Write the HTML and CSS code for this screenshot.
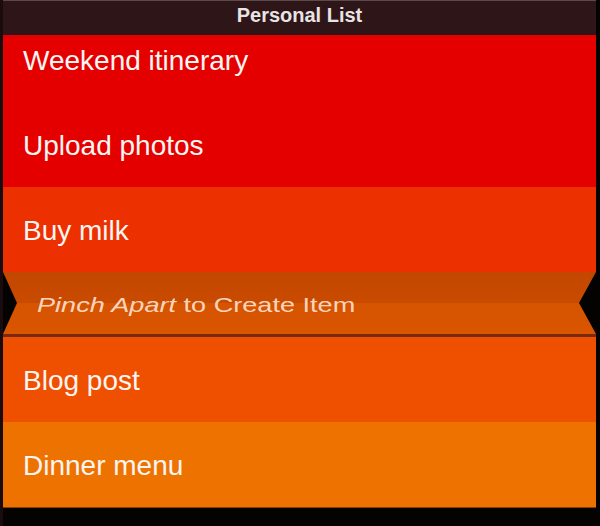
FILE: index.html
```html
<!DOCTYPE html>
<html>
<head>
<meta charset="utf-8">
<title>Personal List</title>
<link rel="stylesheet" href="styles.css">
</head>
<body>
<div class="app">
  <header class="bar"><h1 class="title">Personal List</h1></header>
  <ul class="list">
    <li class="item tone-1 first">Weekend itinerary</li>
    <li class="item tone-1">Upload photos</li>
    <li class="item tone-2">Buy milk</li>
    <li class="pinch"><span class="pinch-text"><em class="slant">Pinch Apart</em> to Create Item</span></li>
    <li class="item tone-3">Blog post</li>
    <li class="item tone-4 last">Dinner menu</li>
  </ul>
</div>
</body>
</html>
```
FILE: styles.css
```css
html, body {
  margin: 0;
  padding: 0;
  background: #070303;
}

.app {
  width: 600px;
  height: 526px;
  box-sizing: border-box;
  padding: 0 4px 0 3px;
  display: flex;
  flex-direction: column;
  background: linear-gradient(to right, #1a0c0c 0, #1a0c0c 3px, #050202 3px);
}

.bar {
  height: 35px;
  flex-shrink: 0;
  box-sizing: border-box;
  border-top: 1px solid #5a4a4a;
  background: #2e1517;
  display: flex;
  align-items: center;
  justify-content: center;
}

.title {
  margin: 0;
  padding-bottom: 6px;
  font: bold 20px/1 "Liberation Sans", Arial, sans-serif;
  color: #e8e4e4;
}

.list {
  margin: 0;
  padding: 0;
  list-style: none;
  overflow: hidden;
  height: 473px;
  flex-shrink: 0;
}

.item {
  height: 85px;
  box-sizing: border-box;
  display: flex;
  align-items: center;
  padding: 3px 0 0 20px;
  font: 28px/1 "Liberation Sans", Arial, sans-serif;
  color: #fbf5f3;
}

.first {
  margin-top: -18px;
}

.last {
  height: 86px;
  border-bottom: 1px solid #8a3c08;
}

.tone-1 { background: #e50000; }
.tone-2 { background: #ec3000; }
.tone-3 { background: #ef5000; }
.tone-4 { background: #ee7200; }

.pinch {
  height: 65px;
  box-sizing: border-box;
  border-bottom: 3px solid #7a2812;
  padding: 3px 0 0 34px;
  display: flex;
  align-items: center;
  background: linear-gradient(#c44700 0, #c94b00 50%, #d65300 50%, #d95500 100%);
  background-clip: padding-box;
  clip-path: polygon(0 0, 100% 0, calc(100% - 17px) 31px, 100% 62px, 100% 100%, 0 100%, 0 62px, 14px 31px);
}

.pinch-text {
  display: inline-block;
  font: 21px/1 "Liberation Sans", Arial, sans-serif;
  color: rgba(255, 230, 218, 0.9);
  transform: scaleX(1.29);
  transform-origin: left center;
  white-space: nowrap;
}

.slant {
  font-style: italic;
}
```
